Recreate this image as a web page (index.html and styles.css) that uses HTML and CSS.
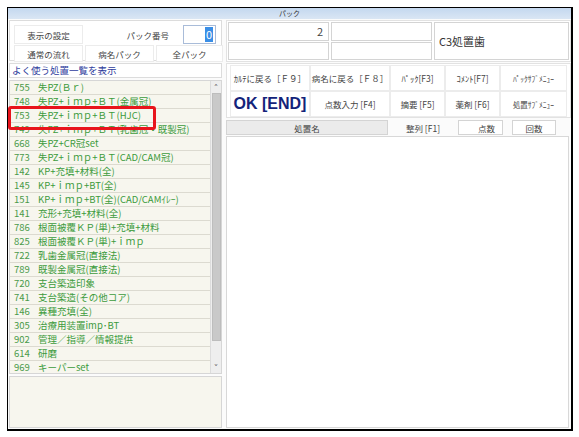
FILE: index.html
```html
<!DOCTYPE html>
<html lang="ja">
<head>
<meta charset="utf-8">
<link rel="stylesheet" href="styles.css">
</head>
<body>
<div class="window">
  <div class="titlebar">パック</div>
  <div class="main">
    <div class="left">
      <div class="panel top-left">
        <div class="cell">表示の設定</div>
        <div class="packno">
          <span class="label">パック番号</span>
          <div class="numbox"><span class="sel">0</span></div>
        </div>
        <div class="cell">通常の流れ</div>
        <div class="cell">病名パック</div>
        <div class="cell">全パック</div>
      </div>
      <div class="panel list-head">よく使う処置一覧を表示</div>
      <div class="listwrap">
        <div class="list">
          <div class="row"><span class="no">755</span><span class="nm">失PZ(Ｂｒ)</span></div>
          <div class="row"><span class="no">748</span><span class="nm">失PZ+ｉｍｐ+ＢＴ(金属冠)</span></div>
          <div class="row"><span class="no">753</span><span class="nm">失PZ+ｉｍｐ+ＢＴ(HJC)</span></div>
          <div class="row"><span class="no">749</span><span class="nm">失PZ+ｉｍｐ+ＢＴ(乳歯冠・既製冠)</span></div>
          <div class="row"><span class="no">668</span><span class="nm">失PZ+CR冠set</span></div>
          <div class="row"><span class="no">773</span><span class="nm">失PZ+ｉｍｐ+ＢＴ(CAD/CAM冠)</span></div>
          <div class="row"><span class="no">142</span><span class="nm">KP+充填+材料(全)</span></div>
          <div class="row"><span class="no">145</span><span class="nm">KP+ｉｍｐ+BT(全)</span></div>
          <div class="row"><span class="no">151</span><span class="nm">KP+ｉｍｐ+BT(全)(CAD/CAMｲﾚｰ)</span></div>
          <div class="row"><span class="no">141</span><span class="nm">充形+充填+材料(全)</span></div>
          <div class="row"><span class="no">786</span><span class="nm">根面被覆ＫＰ(単)+充填+材料</span></div>
          <div class="row"><span class="no">825</span><span class="nm">根面被覆ＫＰ(単)+ｉｍｐ</span></div>
          <div class="row"><span class="no">722</span><span class="nm">乳歯金属冠(直接法)</span></div>
          <div class="row"><span class="no">789</span><span class="nm">既製金属冠(直接法)</span></div>
          <div class="row"><span class="no">720</span><span class="nm">支台築造印象</span></div>
          <div class="row"><span class="no">741</span><span class="nm">支台築造(その他コア)</span></div>
          <div class="row"><span class="no">146</span><span class="nm">異種充填(全)</span></div>
          <div class="row"><span class="no">305</span><span class="nm">治療用装置imp･BT</span></div>
          <div class="row"><span class="no">902</span><span class="nm">管理／指導／情報提供</span></div>
          <div class="row"><span class="no">614</span><span class="nm">研磨</span></div>
          <div class="row"><span class="no">969</span><span class="nm">キーパーset</span></div>
        </div>
        <div class="scrollbar">
          <div class="arrow">&#x2C4;</div>
          <div class="thumb"></div>
          <div class="arrow">&#x2C5;</div>
        </div>
        <div class="highlight"></div>
      </div>
      <div class="panel bottom-left"></div>
    </div>
    <div class="right">
      <div class="top-right">
        <div class="box num">2</div>
        <div class="box"></div>
        <div class="box c3">C3処置歯</div>
        <div class="box"></div>
        <div class="box"></div>
      </div>
      <div class="panel buttons">
        <div class="btn">ｶﾙﾃに戻る［Ｆ９］</div>
        <div class="btn">病名に戻る［Ｆ８］</div>
        <div class="btn">ﾊﾟｯｸ[F3]</div>
        <div class="btn">ｺﾒﾝﾄ[F7]</div>
        <div class="btn small">ﾊﾟｯｸｻﾌﾞﾒﾆｭｰ</div>
        <div class="btn ok">OK [END]</div>
        <div class="btn">点数入力 [F4]</div>
        <div class="btn">摘要 [F5]</div>
        <div class="btn">薬剤 [F6]</div>
        <div class="btn small">処置ｻﾌﾞﾒﾆｭｰ</div>
      </div>
      <div class="colhead">
        <div class="ch name">処置名</div>
        <div class="ch sort">整列 [F1]</div>
        <div class="ch pts">点数</div>
        <div class="ch cnt">回数</div>
      </div>
      <div class="panel content"></div>
    </div>
  </div>
</div>
</body>
</html>
```

FILE: styles.css
```css
* { box-sizing: border-box; }
html, body { margin: 0; padding: 0; background: #fff; }
body {
  font-family: "Noto Sans CJK JP", "Noto Sans", sans-serif;
  font-size: 9px;
  color: #333;
}
.window {
  margin: 7px 0 0 7px;
  width: 566px;
  height: 424px;
  border: 1px solid #000;
  border-right-width: 2px;
  border-bottom-width: 2px;
  background: #fbfbfb;
  display: flex;
  flex-direction: column;
}
.titlebar {
  height: 11px;
  background: linear-gradient(#c4d8ef, #dae6f4);
  text-align: center;
  font-size: 7px;
  line-height: 11px;
  color: #333;
}
.main {
  flex: 1;
  display: flex;
  padding: 1px 0 3px 1px;
  gap: 4px;
}
.panel {
  background: #fff;
  border: 1px solid #dcdcdc;
}
.left {
  width: 213px;
  display: flex;
  flex-direction: column;
  gap: 2px;
}
.top-left {
  height: 41px;
  padding: 4px 0 0 4px;
  display: grid;
  grid-template-columns: 69px 69px 67px;
  grid-template-rows: 19px 17px;
  column-gap: 2px;
  row-gap: 1px;
}
.cell {
  border: 1px solid #ececec;
  background: #fff;
  display: flex;
  align-items: center;
  justify-content: center;
  color: #444;
  font-size: 8.5px;
}
.packno {
  grid-column: 2 / span 2;
  display: flex;
  align-items: stretch;
  justify-content: flex-end;
  gap: 14px;
  padding-right: 7px;
}
.label {
  display: flex;
  align-items: center;
  font-size: 8.5px;
  color: #444;
}
.numbox {
  width: 33px;
  border: 1px solid #a9bcd9;
  background: #fff;
  display: flex;
  align-items: center;
  justify-content: flex-end;
  padding: 1px 2px 1px 0;
}
.sel {
  background: #3a8ee6;
  color: #fff;
  font-size: 11px;
  line-height: 15px;
  padding: 0 1px;
}
.list-head {
  height: 15px;
  color: #2e3c9c;
  font-size: 9.5px;
  line-height: 13px;
  padding-left: 2px;
}
.listwrap {
  position: relative;
  height: 294px;
  display: flex;
  border: 1px solid #d6d6d6;
  background: #f7f6ee;
}
.list {
  flex: 1;
  overflow: hidden;
}
.row {
  height: 14px;
  border-bottom: 1px solid #dcdad0;
  display: flex;
  align-items: center;
  font-size: 9.5px;
  line-height: 13px;
  white-space: nowrap;
  overflow: hidden;
  color: #3c9b3c;
}
.row .no {
  width: 28px;
  padding-left: 4px;
  color: #4a9a4a;
}
.scrollbar {
  width: 11px;
  background: #eeeeee;
  border-left: 1px solid #dcdcdc;
  display: flex;
  flex-direction: column;
  align-items: center;
}
.arrow {
  height: 12px;
  font-size: 9px;
  line-height: 14px;
  color: #666;
  font-family: "DejaVu Sans", sans-serif;
}
.thumb {
  width: 9px;
  flex: 1;
  background: #c9c9c9;
  margin: 0 0 20px 0;
  border: 1px solid #bdbdbd;
}
.highlight {
  position: absolute;
  left: -2px;
  top: 25px;
  width: 148px;
  height: 24px;
  border: 3px solid #e8141c;
  border-radius: 3px;
}
.bottom-left {
  height: 52px;
  background: #f7f6ee;
  border-color: #d6d6d6;
}
.right {
  width: 346px;
  display: flex;
  flex-direction: column;
  gap: 1px;
}
.top-right {
  height: 42px;
  border: 1px solid #e2e2e2;
  background: #fff;
  padding: 1px;
  display: grid;
  grid-template-columns: 101px 101px 1fr;
  grid-template-rows: 19px 18px;
  column-gap: 2px;
  row-gap: 1px;
}
.box {
  border: 1px solid #d4d4d4;
  background: #fff;
  font-size: 11px;
}
.box.num {
  text-align: right;
  padding-right: 5px;
  line-height: 16px;
  color: #444;
}
.box.c3 {
  grid-column: 3;
  grid-row: 1 / span 2;
  display: flex;
  align-items: center;
  padding-left: 4px;
  color: #333;
}
.buttons {
  height: 55px;
  padding: 1px 3px;
  display: grid;
  grid-template-columns: 80px 80px 55px 55px 1fr;
  grid-template-rows: 26px 26px;
  border-color: #e2e2e2;
}
.btn {
  border: 1px solid #ececec;
  display: flex;
  align-items: center;
  justify-content: center;
  font-size: 8.5px;
  color: #444;
  white-space: nowrap;
}
.btn.small { font-size: 7.5px; }
.btn.ok {
  font-family: "Liberation Sans", Arial, sans-serif;
  font-weight: bold;
  font-size: 16px;
  color: #13237a;
}
.colhead {
  height: 15px;
  display: flex;
  align-items: stretch;
  margin-top: 1px;
}
.ch {
  font-size: 8.5px;
  color: #444;
  display: flex;
  align-items: center;
}
.ch.name {
  width: 162px;
  background: #ebebeb;
  border: 1px solid #d4d4d4;
  justify-content: center;
}
.ch.sort {
  width: 70px;
  justify-content: center;
}
.ch.pts {
  width: 45px;
  background: #fff;
  border: 1px solid #d4d4d4;
  justify-content: flex-end;
  padding-right: 7px;
}
.ch.cnt {
  width: 44px;
  margin-left: 9px;
  background: #fff;
  border: 1px solid #d4d4d4;
  justify-content: center;
}
.content {
  flex: 1;
  margin-right: 2px;
  border-color: #d8d8d8;
}
```
